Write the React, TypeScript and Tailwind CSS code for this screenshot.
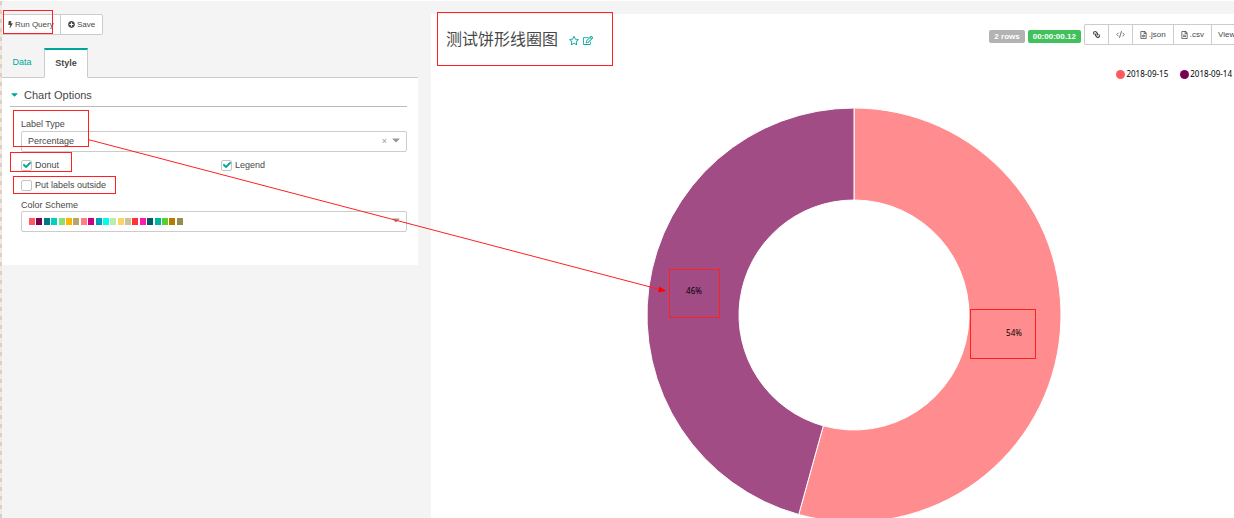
import { useState } from 'react';
import type { ReactNode } from 'react';
import { CodeXml } from 'lucide-react';
import { FaBolt, FaCaretDown, FaCheck, FaLink, FaPlusCircle, FaRegEdit, FaRegFileAlt, FaRegFileCode, FaRegStar } from 'react-icons/fa';

const SCHEME = [
  '#ff5a5f', '#7b0051', '#007a87', '#00d1c1', '#8ce071', '#ffb400', '#b4a76c',
  '#ff8083', '#cc0086', '#00a1b3', '#00ffeb', '#bbedab', '#ffd266', '#cbc29a',
  '#ff3339', '#ff1ab1', '#005c66', '#00b3a5', '#55d12e', '#b37e00', '#988b4e',
];

const SERIES = [
  { label: '2018-09-15', share: 0.543, color: '#ff5a5f', fill: '#ff8c8f' },
  { label: '2018-09-14', share: 0.457, color: '#7b0051', fill: '#a24c85' },
];

const OUTER = 207;
const INNER = 115;

const arcPath = (from: number, to: number) => {
  const point = (r: number, t: number) =>
    `${r * Math.sin(t * 2 * Math.PI)} ${-r * Math.cos(t * 2 * Math.PI)}`;
  const large = to - from > 0.5 ? 1 : 0;
  return `M ${point(OUTER, from)} A ${OUTER} ${OUTER} 0 ${large} 1 ${point(OUTER, to)} L ${point(INNER, to)} A ${INNER} ${INNER} 0 ${large} 0 ${point(INNER, from)} Z`;
};

const CheckOption = ({ id, label, initial }: { id: string; label: string; initial: boolean }) => {
  const [checked, setChecked] = useState(initial);
  return (
    <label htmlFor={id} className="flex h-3 items-center gap-[3px] leading-3">
      <span className="grid h-[11px] w-[11px] place-items-center">
        <input
          id={id}
          type="checkbox"
          checked={checked}
          onChange={(e) => setChecked(e.target.checked)}
          className="col-start-1 row-start-1 h-[11px] w-[11px] appearance-none rounded-[2px] border border-[#c4c4c4] bg-white"
        />
        {checked && (
          <FaCheck className="pointer-events-none col-start-1 row-start-1 h-2 w-2 stroke-[#00a699] stroke-[40] text-[#00a699]" />
        )}
      </span>
      {label}
    </label>
  );
};

const ToolButton = ({ children, label }: { children: ReactNode; label?: string }) => (
  <button type="button" aria-label={label} className="flex h-full items-center gap-[2px] border-r border-[#ccc] px-[7px]">
    {children}
  </button>
);

const ControlPanel = () => (
  <section className="min-w-0 pt-[13px]">
    <div className="flex h-[21px] w-[101px] rounded-r-[2px] border border-l-0 border-[#ccc] bg-white text-[8px] text-[#484848]">
      <button type="button" className="flex w-[59px] items-center gap-[2px] border-r border-[#ccc] pl-[6px]">
        <FaBolt className="h-[7px] w-[5px]" />
        Run Query
      </button>
      <button type="button" className="flex flex-1 items-center justify-center gap-[2px]">
        <FaPlusCircle className="h-[7px] w-[7px]" />
        Save
      </button>
    </div>

    <div role="tablist" className="mt-[13px] flex h-[30px] border-b border-[#ccc] text-[9px]">
      <button type="button" role="tab" aria-selected="false" className="w-[42px] pr-[2px] text-[#00a699]">
        Data
      </button>
      <button
        type="button"
        role="tab"
        aria-selected="true"
        className="-mb-px w-11 border border-t-2 border-[#ccc] border-t-[#00a699] border-b-white bg-white pt-px font-bold"
      >
        Style
      </button>
    </div>

    <div className="bg-white px-2 pt-2 pb-[33px]">
      <div className="mr-[3px] flex h-[21px] items-center gap-[6px] border-b border-[#bbb] pb-[2px] pl-px text-[11px]">
        <FaCaretDown className="mb-[2px] h-[11px] w-[7px] text-[#00a699]" />
        <h2>Chart Options</h2>
      </div>

      <div className="mr-[3px] pt-[11px] pl-[11px]">
        <label htmlFor="label-type" className="mb-px block h-3 leading-3">
          Label Type
        </label>
        <div className="grid items-center">
          <select
            id="label-type"
            className="col-start-1 row-start-1 h-[21px] w-full appearance-none rounded-[2px] border border-[#ccc] bg-white pl-[6px]"
          >
            <option>Percentage</option>
          </select>
          <div className="pointer-events-none col-start-1 row-start-1 flex items-center gap-[5px] justify-self-end pr-[7px] text-[#999]">
            <span>×</span>
            <FaCaretDown className="mb-[3px] h-3 w-[8px]" />
          </div>
        </div>

        <div className="mt-[7px] grid grid-cols-[200px_1fr] gap-y-2">
          <CheckOption id="donut" label="Donut" initial />
          <CheckOption id="legend" label="Legend" initial />
          <CheckOption id="labels-outside" label="Put labels outside" initial={false} />
        </div>

        <div id="scheme-label" className="mt-2 h-3 leading-3">
          Color Scheme
        </div>
        <button
          type="button"
          aria-labelledby="scheme-label"
          aria-haspopup="listbox"
          className="flex h-[21px] w-full items-center justify-between rounded-[2px] border border-[#ccc] bg-white pr-[6px] pl-[7px]"
        >
          <span className="flex w-[154px] justify-between">
            {SCHEME.map((color) => (
              <span key={color} className="h-[7px] w-[6px]" style={{ background: color }} />
            ))}
          </span>
          <FaCaretDown className="mb-[3px] h-3 w-[8px] text-[#999]" />
        </button>
      </div>
    </div>
  </section>
);

const DonutChart = () => {
  let start = 0;
  return (
    <svg viewBox="-208 -208 416 416" className="h-[416px] w-[416px] shrink-0" role="img" aria-label="Donut chart">
      {SERIES.map(({ label, share, fill }) => {
        const from = start;
        start += share;
        return <path key={label} d={arcPath(from, start)} fill={fill} stroke="#fff" strokeWidth="1" />;
      })}
      <g className="font-['Noto_Sans',sans-serif] text-[8px]" fill="#000" textAnchor="middle">
        <text x="160" y="21">54%</text>
        <text x="-160" y="-21">46%</text>
      </g>
    </svg>
  );
};

const ChartPanel = () => (
  <section className="mt-[13px] min-w-0 bg-white">
    <header className="flex h-12 items-center justify-between pl-[15px]">
      <div className="flex items-center gap-[11px]">
        <h1 className="font-['Noto_Sans_CJK_SC',sans-serif] text-[16px] leading-6">测试饼形线圈图</h1>
        <div className="flex gap-1 pt-1 text-[#00a699]">
          <button type="button" aria-label="Favorite">
            <FaRegStar className="h-[9px] w-[10px]" />
          </button>
          <button type="button" aria-label="Edit title">
            <FaRegEdit className="h-[9px] w-[10px]" />
          </button>
        </div>
      </div>

      <div className="flex items-center pb-[7px] text-[8px] whitespace-nowrap">
        <span className="mt-1 mr-[3px] rounded-[2px] bg-[#b3b3b3] px-[5px] leading-[13px] font-bold text-white">2 rows</span>
        <span className="mt-1 mr-[3px] rounded-[2px] bg-[#41c15b] px-[5px] leading-[13px] font-bold text-white">00:00:00.12</span>
        <div className="flex h-[21px] rounded-l-[2px] border border-r-0 border-[#ccc] bg-white">
          <ToolButton label="Permalink">
            <FaLink className="h-[7px] w-[9px] -scale-x-100" />
          </ToolButton>
          <ToolButton label="Embed code">
            <CodeXml className="h-[9px] w-[9px]" />
          </ToolButton>
          <ToolButton>
            <FaRegFileCode className="h-2 w-[7px]" />
            .json
          </ToolButton>
          <ToolButton>
            <FaRegFileAlt className="h-2 w-[7px]" />
            .csv
          </ToolButton>
          <button type="button" className="w-[22px] overflow-hidden pl-[6px] text-left">
            View
          </button>
        </div>
      </div>
    </header>

    <ul className="mt-[2px] flex h-5 items-center justify-end gap-3 pr-[2px] font-['Noto_Sans',sans-serif] text-[8px] text-black">
      {SERIES.map(({ label, color }) => (
        <li key={label} className="flex items-center gap-px">
          <span className="h-[9px] w-[9px] rounded-full" style={{ background: color }} />
          {label}
        </li>
      ))}
    </ul>

    <div className="flex justify-center pt-[23px] pl-[42px]">
      <DonutChart />
    </div>
  </section>
);

// Red callouts drawn over the whole page
const Annotations = () => (
  <svg className="pointer-events-none absolute inset-x-0 -top-px h-full w-full" aria-hidden="true">
    <g fill="none" stroke="#ff2020" strokeWidth="1" shapeRendering="crispEdges">
      <rect x="3.5" y="10.5" width="49" height="23" />
      <rect x="13.5" y="110.5" width="75" height="36" />
      <rect x="10.5" y="152.5" width="61" height="19" />
      <rect x="13.5" y="176.5" width="102" height="17" />
      <rect x="437.5" y="12.5" width="175" height="53" />
      <rect x="669.5" y="269.5" width="50" height="48" />
      <rect x="970.5" y="309.5" width="65" height="49" />
    </g>
    <path d="M88 139.500L660 289.500" stroke="#ff2020" strokeWidth="1" />
    <path d="M666 291L658 292.500L659.500 286.500Z" fill="#ff0000" />
  </svg>
);

const App = () => (
  <main className="relative flex h-screen overflow-hidden border-t border-white bg-[#f4f4f4] font-['Liberation_Sans',Arial,sans-serif] text-[9px] text-[#484848]">
    <div className="w-[2px] shrink-0 bg-[repeating-linear-gradient(to_bottom,#d9d0c7_0px,#d9d0c7_4px,#f1e9dd_4px,#f1e9dd_9px)]" />
    <div className="grid min-w-0 flex-1 grid-cols-[416fr_803fr] gap-[13px]">
      <ControlPanel />
      <ChartPanel />
    </div>
    <Annotations />
  </main>
);

export default App;
